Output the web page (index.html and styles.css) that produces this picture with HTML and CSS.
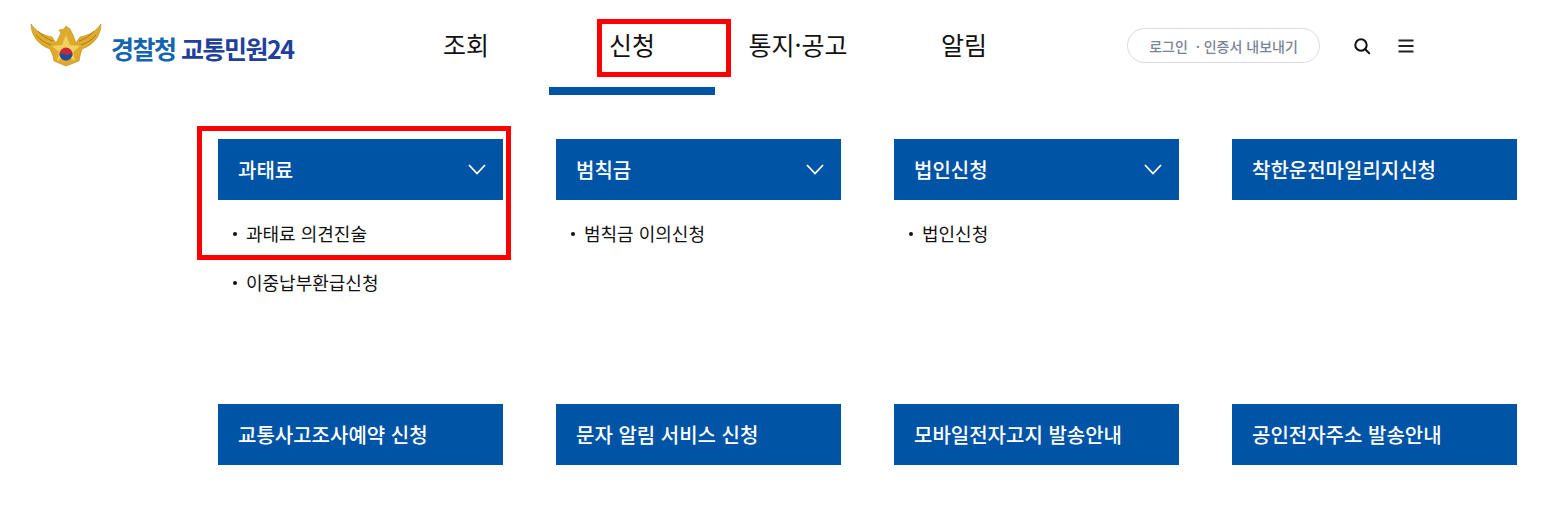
FILE: index.html
```html
<!DOCTYPE html>
<html lang="ko">
<head>
<meta charset="utf-8">
<title>경찰청 교통민원24</title>
<link rel="stylesheet" href="styles.css">
</head>
<body>
    <header class="header">
        <a class="logo" href="#">
            <svg class="logo-mark" width="72" height="44" viewBox="0 0 72 44">
                <path d="M1 1 C6 8 12 12 22 14 L26 20 L31 10 L29 7 L34 6 L36 3 L40 6 L43 12 L46 20 L50 14 C60 12 66 8 71 1 C71 12 64 22 52 26 L50 33 L49 38 L36 43 L24 38 L23 33 L20 26 C8 22 1 12 1 1 Z" fill="#e0ab2c" stroke="#b98a1e" stroke-width="0.6"/>
                <path d="M8 8 C12 13 17 16 23 18 M6 12 C10 17 15 20 21 22 M64 8 C60 13 55 16 49 18 M66 12 C62 17 57 20 51 22" stroke="#a97c18" stroke-width="1" fill="none"/>
                <path d="M36 12 L40 22 L50 23 L43 29 L45 38 L36 33 L27 38 L29 29 L22 23 L32 22 Z" fill="#f2d05e"/>
                <circle cx="36" cy="31" r="6.5" fill="#c8283c"/>
                <path d="M29.5 31 A6.5 6.5 0 0 0 42.5 31 C40 29 38 33 36 32 C34 31 32 29 29.5 31 Z" fill="#1d4f9c"/>
            </svg>
            <span class="logo-text"><span class="logo-org">경찰청</span> <span class="logo-name">교통민원24</span></span>
        </a>
        <nav class="gnb">
            <a class="gnb-item" href="#">조회</a>
            <a class="gnb-item active" href="#">신청</a>
            <a class="gnb-item" href="#">통지·공고</a>
            <a class="gnb-item" href="#">알림</a>
        </nav>
        <div class="util">
            <button type="button" class="login-button">로그인 &nbsp;· 인증서 내보내기</button>
            <button type="button" class="icon-button" aria-label="검색">
                <svg width="18" height="18" viewBox="0 0 18 18" fill="none" stroke="#111" stroke-width="2">
                    <circle cx="8" cy="8" r="5.7"/>
                    <path d="M12.2 12.2 L16.2 16.2" stroke-linecap="round"/>
                </svg>
            </button>
            <button type="button" class="icon-button" aria-label="메뉴">
                <svg width="16" height="14" viewBox="0 0 16 14" fill="none" stroke="#222" stroke-width="2">
                    <path d="M0.5 1.5 H15.5 M0.5 7 H15.5 M0.5 12.5 H15.5"/>
                </svg>
            </button>
        </div>
    </header>

    <main class="menu-grid">
        <section class="menu-card">
            <h2 class="menu-title">과태료
                <svg class="chevron" width="18" height="11" viewBox="0 0 18 11" fill="none" stroke="#fff" stroke-width="1.8"><path d="M1 1 L9 9.5 L17 1"/></svg>
            </h2>
            <ul class="sub-list">
                <li>과태료 의견진술</li>
                <li>이중납부환급신청</li>
            </ul>
        </section>
        <section class="menu-card">
            <h2 class="menu-title">범칙금
                <svg class="chevron" width="18" height="11" viewBox="0 0 18 11" fill="none" stroke="#fff" stroke-width="1.8"><path d="M1 1 L9 9.5 L17 1"/></svg>
            </h2>
            <ul class="sub-list">
                <li>범칙금 이의신청</li>
            </ul>
        </section>
        <section class="menu-card">
            <h2 class="menu-title">법인신청
                <svg class="chevron" width="18" height="11" viewBox="0 0 18 11" fill="none" stroke="#fff" stroke-width="1.8"><path d="M1 1 L9 9.5 L17 1"/></svg>
            </h2>
            <ul class="sub-list">
                <li>법인신청</li>
            </ul>
        </section>
        <section class="menu-card">
            <h2 class="menu-title">착한운전마일리지신청</h2>
        </section>
        <section class="menu-card">
            <h2 class="menu-title">교통사고조사예약 신청</h2>
        </section>
        <section class="menu-card">
            <h2 class="menu-title">문자 알림 서비스 신청</h2>
        </section>
        <section class="menu-card">
            <h2 class="menu-title">모바일전자고지 발송안내</h2>
        </section>
        <section class="menu-card">
            <h2 class="menu-title">공인전자주소 발송안내</h2>
        </section>
    </main>

    <div class="mark mark-nav"></div>
    <div class="mark mark-card"></div>
</body>
</html>
```

FILE: styles.css
```css
:root {
    --primary-color: #0054a6;
    --text-color: #111;
    --mark-color: #ff0000;
}

body {
    position: relative;
    margin: 0;
    height: 512px;
    overflow: hidden;
    background-color: #fff;
    color: var(--text-color);
    font-family: "Noto Sans CJK KR", "Noto Sans", sans-serif;
}

.header {
    display: flex;
    align-items: flex-start;
    height: 95px;
}

.logo {
    display: flex;
    align-items: center;
    gap: 9px;
    width: 383px;
    height: 90px;
    padding-left: 30px;
    box-sizing: border-box;
    text-decoration: none;
}

.logo-mark {
    flex: none;
}

.logo-text {
    margin-top: 6px;
    font-size: 25px;
    font-weight: 700;
    letter-spacing: -1.5px;
    white-space: nowrap;
}

.logo-org {
    color: #1464ae;
}

.logo-name {
    color: #22409a;
}

.gnb {
    display: flex;
    width: 664px;
}

.gnb-item {
    width: 166px;
    height: 95px;
    box-sizing: border-box;
    padding-top: 26px;
    font-size: 25px;
    line-height: 37px;
    text-align: center;
    color: var(--text-color);
    text-decoration: none;
}

.gnb-item.active {
    border-bottom: 8px solid var(--primary-color);
}

.util {
    display: flex;
    align-items: center;
    height: 91px;
    margin-left: 80px;
}

.login-button {
    width: 193px;
    height: 35px;
    padding: 0;
    border: 1px solid #d8dce8;
    border-radius: 18px;
    background-color: #fff;
    color: #7b8494;
    font-family: inherit;
    font-size: 14px;
    font-weight: 500;
}

.icon-button {
    display: flex;
    padding: 0;
    border: none;
    background: none;
}

.icon-button:nth-child(2) {
    margin-left: 33px;
}

.icon-button:nth-child(3) {
    margin-left: 27px;
}

.menu-grid {
    display: grid;
    grid-template-columns: repeat(4, 285px);
    grid-auto-rows: 265px;
    column-gap: 53px;
    padding: 44px 0 0 218px;
}

.menu-title {
    display: flex;
    align-items: center;
    justify-content: space-between;
    height: 61px;
    margin: 0;
    padding: 0 17px 0 20px;
    background-color: var(--primary-color);
    color: #fff;
    font-size: 20px;
    font-weight: 500;
}

.sub-list {
    margin: 0;
    padding: 9px 0 0 14px;
    list-style: none;
}

.sub-list li {
    position: relative;
    height: 49px;
    padding-left: 14px;
    font-size: 18px;
    line-height: 49px;
}

.sub-list li::before {
    content: "";
    position: absolute;
    left: 1px;
    top: 23px;
    width: 4px;
    height: 4px;
    border-radius: 50%;
    background-color: var(--text-color);
}

.mark {
    position: absolute;
    box-sizing: border-box;
    border: 5px solid var(--mark-color);
}

.mark-nav {
    left: 597px;
    top: 19px;
    width: 134px;
    height: 58px;
}

.mark-card {
    left: 197px;
    top: 126px;
    width: 314px;
    height: 134px;
}
```
